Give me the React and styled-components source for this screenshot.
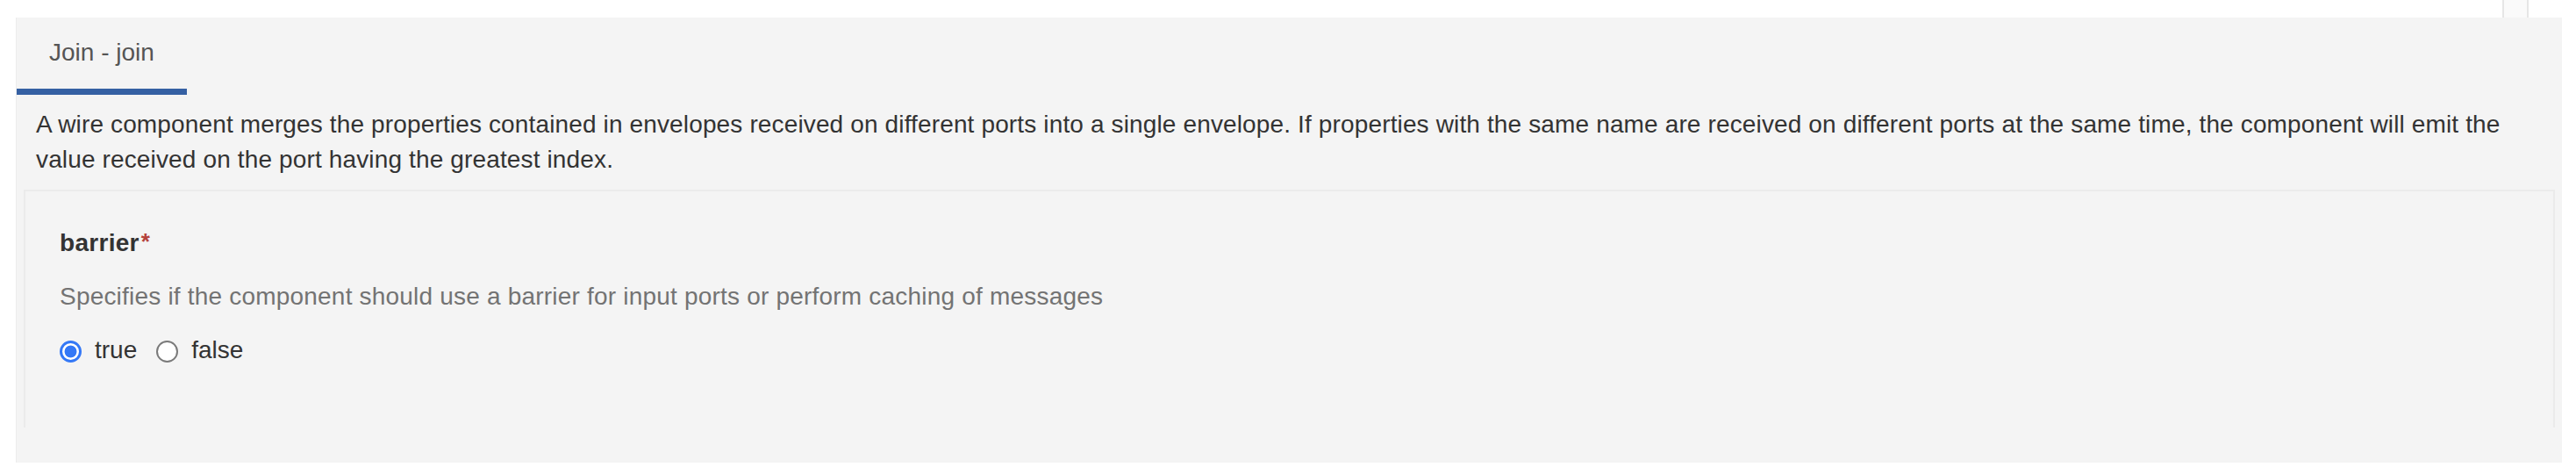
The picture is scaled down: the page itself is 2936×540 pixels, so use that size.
import styled, { createGlobalStyle } from "styled-components";

const GlobalStyle = createGlobalStyle`
  html, body {
    margin: 0;
    padding: 0;
    background: #ffffff;
  }
  body {
    font-family: "Liberation Sans", Arial, Helvetica, sans-serif;
    color: #333333;
  }
`;

const Page = styled.div`
  position: relative;
  padding: 20px 16px 13px 18px;
`;

const CornerStub = styled.div`
  position: absolute;
  top: 0;
  right: 54px;
  width: 26px;
  height: 20px;
  background: #fafafa;
  border-left: 2px solid #e6e6e6;
  border-right: 2px solid #e6e6e6;
`;

const Panel = styled.div`
  height: 507px;
  background: #f4f4f4;
  border-left: 1px solid #ececec;
  box-sizing: border-box;
  display: flex;
  flex-direction: column;
`;

const TabBar = styled.div`
  display: flex;
`;

const Tab = styled.div`
  padding: 20px 37px 21px 37px;
  font-size: 28px;
  line-height: 40px;
  color: #555555;
  border-bottom: 7px solid ${(p) => (p.$active ? "#3560a3" : "transparent")};
`;

const Description = styled.p`
  margin: 0;
  padding: 14px 22px 14px 22px;
  font-size: 28px;
  line-height: 40px;
  letter-spacing: 0.14px;
  color: #333333;
`;

const FieldBox = styled.div`
  margin: 0 8px;
  height: 271px;
  box-sizing: border-box;
  border: 2px solid #ebebeb;
  border-bottom: none;
  padding: 37px 39px 0 39px;
`;

const Label = styled.div`
  font-size: 28px;
  line-height: 40px;
  font-weight: 700;
  letter-spacing: 0.3px;
  color: #333333;
`;

const Required = styled.span`
  margin-left: 2px;
  font-size: 26px;
  color: #b5423c;
  vertical-align: 2px;
`;

const Help = styled.div`
  margin-top: 21px;
  font-size: 28px;
  line-height: 40px;
  letter-spacing: 0.2px;
  color: #737373;
`;

const RadioGroup = styled.div`
  margin-top: 21px;
  display: flex;
  align-items: center;
  font-size: 28px;
  line-height: 40px;
  color: #333333;
`;

const Option = styled.label`
  display: flex;
  align-items: center;
  margin-right: 22px;
`;

const Radio = styled.input.attrs({ type: "radio" })`
  appearance: none;
  margin: 0 15px 0 0;
  width: 25px;
  height: 25px;
  border-radius: 50%;
  box-sizing: border-box;
  background: #ffffff;
  border: 2px solid #7a7a7a;
  position: relative;
  top: 1px;

  &:checked {
    border: 3px solid #3478f6;
    background: radial-gradient(circle, #3478f6 0 6.5px, #ffffff 7.3px);
  }
`;

const App = () => {
  return (
    <>
      <GlobalStyle />
      <Page>
        <CornerStub />
        <Panel>
          <TabBar>
            <Tab $active>Join - join</Tab>
          </TabBar>
          <Description>
            A wire component merges the properties contained in envelopes
            received on different ports into a single envelope. If properties
            with the same name are received on different ports at the same
            time, the component will emit the value received on the port having
            the greatest index.
          </Description>
          <FieldBox>
            <Label>
              barrier<Required>*</Required>
            </Label>
            <Help>
              Specifies if the component should use a barrier for input ports or
              perform caching of messages
            </Help>
            <RadioGroup>
              <Option>
                <Radio name="barrier" defaultChecked />
                true
              </Option>
              <Option>
                <Radio name="barrier" />
                false
              </Option>
            </RadioGroup>
          </FieldBox>
        </Panel>
      </Page>
    </>
  );
};

export default App;
